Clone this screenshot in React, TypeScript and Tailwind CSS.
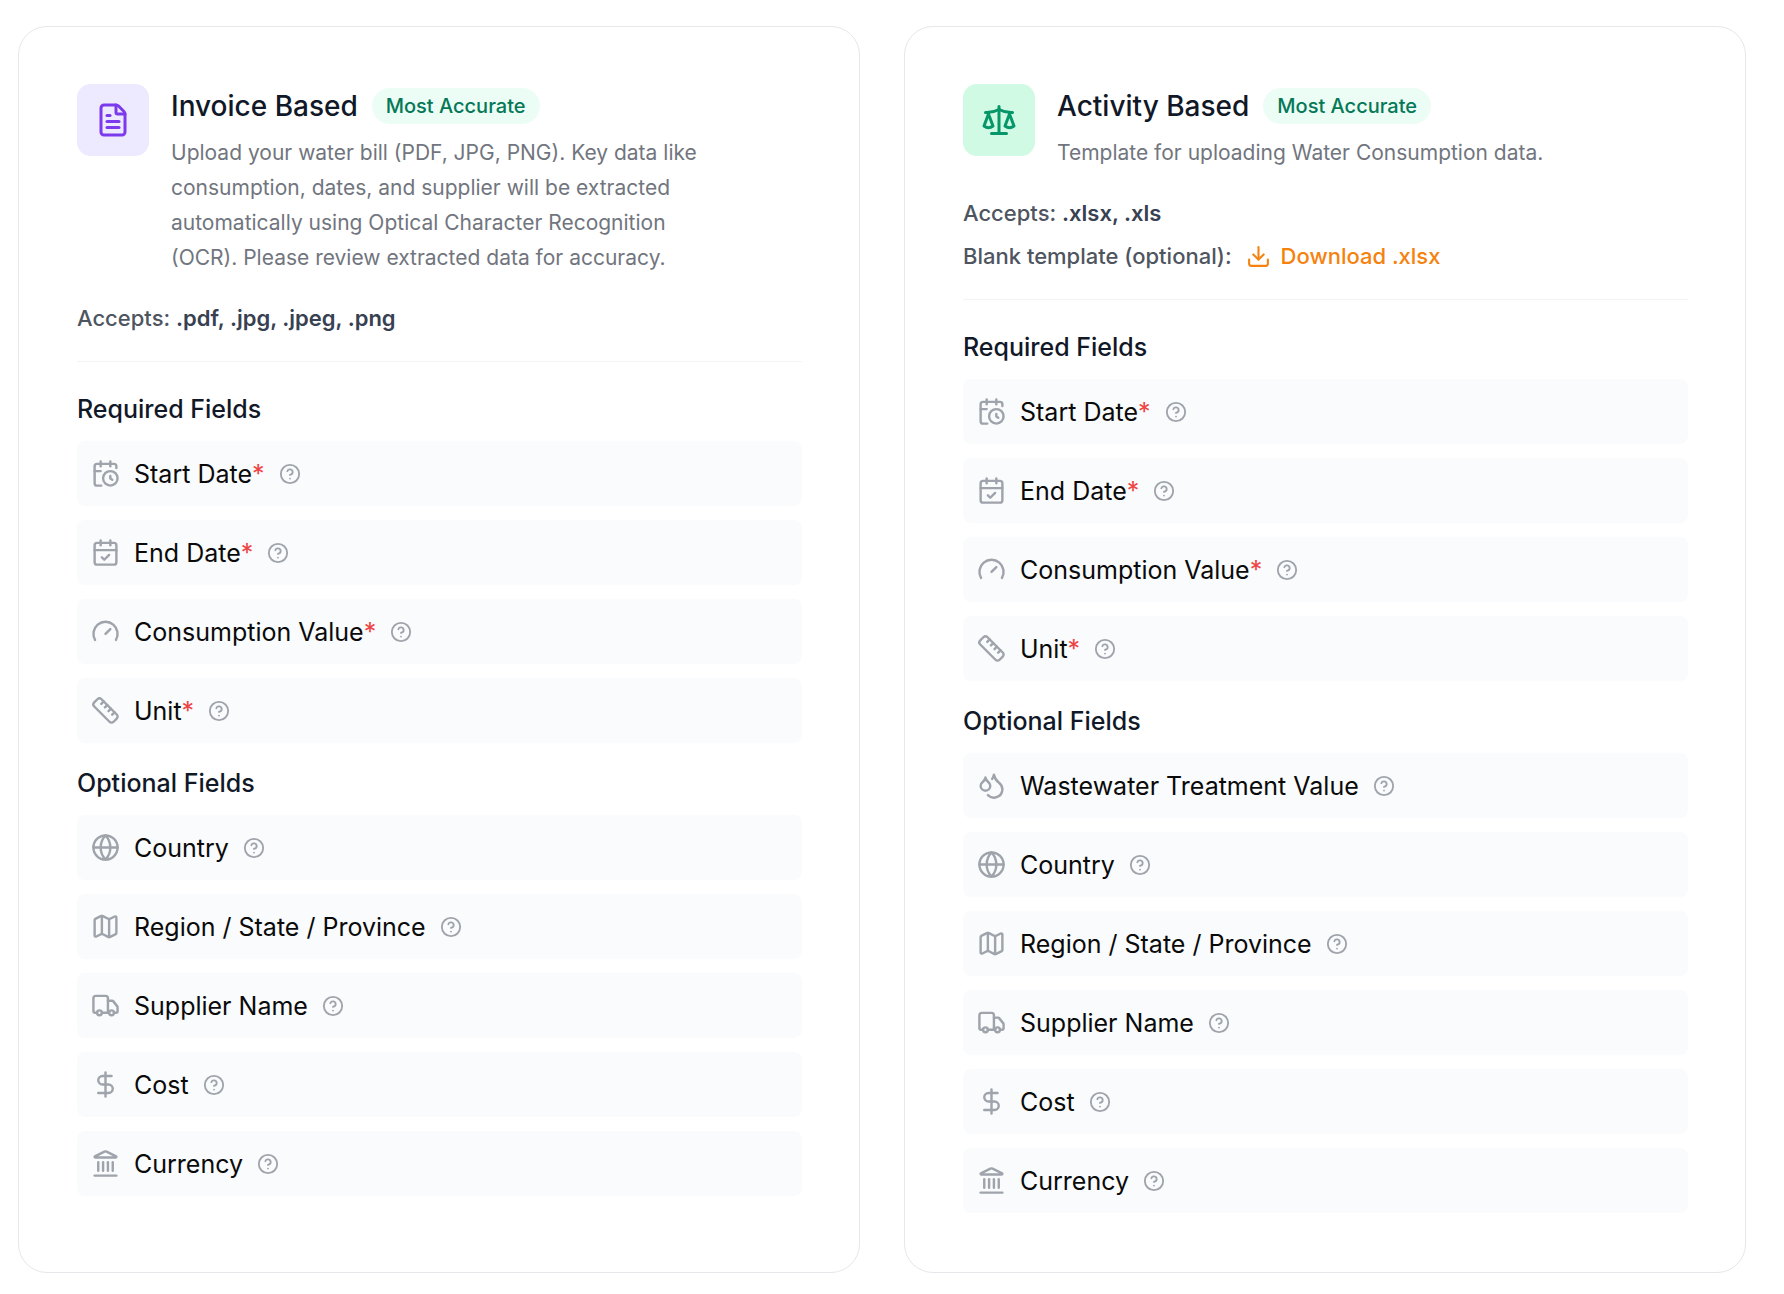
import React from 'react';
import {
  FileText, Scale, CalendarClock, CalendarCheck, Gauge, Ruler, Globe, Map, Truck,
  DollarSign, Landmark, Droplets, Download, CircleQuestionMark, LucideIcon,
} from 'lucide-react';

interface Field { icon: LucideIcon; label: string; required?: boolean }

const requiredFields: Field[] = [
  { icon: CalendarClock, label: 'Start Date', required: true },
  { icon: CalendarCheck, label: 'End Date', required: true },
  { icon: Gauge, label: 'Consumption Value', required: true },
  { icon: Ruler, label: 'Unit', required: true },
];

const optionalFields: Field[] = [
  { icon: Globe, label: 'Country' },
  { icon: Map, label: 'Region / State / Province' },
  { icon: Truck, label: 'Supplier Name' },
  { icon: DollarSign, label: 'Cost' },
  { icon: Landmark, label: 'Currency' },
];

const FieldList: React.FC<{ title: string; fields: Field[] }> = ({ title, fields }) => (
  <section>
    <h3 className="mb-[14px] text-[25px] leading-9 font-medium text-[#111827]">{title}</h3>
    <ul className="flex flex-col gap-[14px]">
      {fields.map(({ icon: Icon, label, required }) => (
        <li key={label} className="flex h-[65px] items-center gap-[14px] rounded-lg bg-[#f9fbfc] px-[14px]">
          <Icon className="size-[29px] shrink-0 text-[#9fa3ab]" />
          <span className="text-[25px] leading-9 text-[#0a0a0a]">
            {label}
            {required && <span className="text-[#ef4444]">*</span>}
          </span>
          <button type="button" aria-label={`About ${label}`} className="text-[#9fa3ab]">
            <CircleQuestionMark className="size-[22px]" />
          </button>
        </li>
      ))}
    </ul>
  </section>
);

interface MethodCardProps {
  icon: React.ReactNode;
  title: string;
  description: string;
  accepts: string;
  template?: string;
  optional: Field[];
}

const MethodCard: React.FC<MethodCardProps> = ({ icon, title, description, accepts, template, optional }) => (
  <article className="min-w-0 flex-1 rounded-[29px] border border-[#e5e7eb] bg-white py-[57px] pr-[57px] pl-[58px]">
    <header className="flex items-start gap-[22px]">
      {icon}
      <div className="min-w-0">
        <div className="flex items-center gap-[14px]">
          <h2 className="text-[28px] leading-[44px] font-medium text-[#111827]">{title}</h2>
          <span className="rounded-full bg-[#ecfdf5] px-[14px] py-1 text-[20px] leading-7 font-medium text-[#047857]">
            Most Accurate
          </span>
        </div>
        <p className="mt-[7px] max-w-[560px] text-[21px] leading-[35px] text-[#71757e]">{description}</p>
      </div>
    </header>

    <div className="mt-[26px] flex flex-col gap-2 border-b border-[#f3f4f6] pb-[25px] text-[22px] leading-[35px] font-medium text-[#4f555f]">
      <p>
        Accepts: <span className="font-semibold text-[#374151]">{accepts}</span>
      </p>
      {template && (
        <div className="flex items-center gap-[14px]">
          <span>Blank template (optional):</span>
          <a href="#" className="flex items-center gap-[10px] text-[#f5820f]">
            <Download className="size-[25px]" />
            {template}
          </a>
        </div>
      )}
    </div>

    <div className="mt-[29px] flex flex-col gap-[22px]">
      <FieldList title="Required Fields" fields={requiredFields} />
      <FieldList title="Optional Fields" fields={optional} />
    </div>
  </article>
);

const App: React.FC = () => {
  return (
    <main className="flex min-h-screen items-stretch gap-11 bg-white pt-[26px] pr-[38px] pb-[21px] pl-[18px] font-['Inter',sans-serif]">
      <MethodCard
        icon={
          <div className="flex size-[72px] shrink-0 items-center justify-center rounded-[14px] bg-[#ede9fe] text-[#7c3aed]">
            <FileText className="size-9" />
          </div>
        }
        title="Invoice Based"
        description="Upload your water bill (PDF, JPG, PNG). Key data like consumption, dates, and supplier will be extracted automatically using Optical Character Recognition (OCR). Please review extracted data for accuracy."
        accepts=".pdf, .jpg, .jpeg, .png"
        optional={optionalFields}
      />
      <MethodCard
        icon={
          <div className="flex size-[72px] shrink-0 items-center justify-center rounded-[14px] bg-[#d1fae5] text-[#059669]">
            <Scale className="size-9" />
          </div>
        }
        title="Activity Based"
        description="Template for uploading Water Consumption data."
        accepts=".xlsx, .xls"
        template="Download .xlsx"
        optional={[{ icon: Droplets, label: 'Wastewater Treatment Value' }, ...optionalFields]}
      />
    </main>
  );
};

export default App;
